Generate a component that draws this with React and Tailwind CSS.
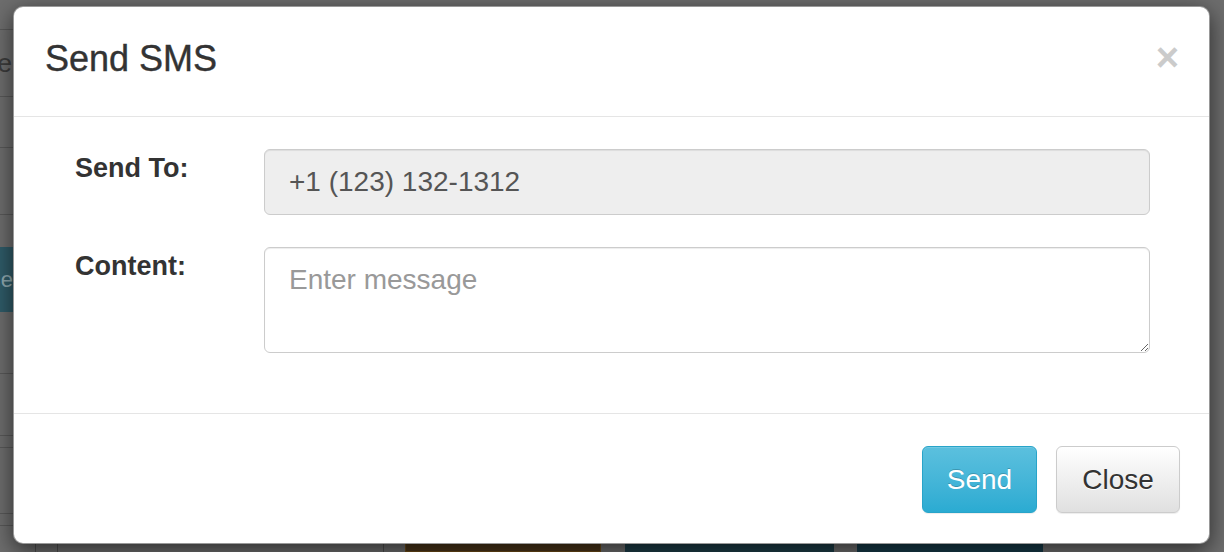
import React from 'react';

const leftRows = [
  { h: 'h-[30px]' },
  { h: 'h-[67px]', text: 'Name' },
  { h: 'h-[51px]' },
  { h: 'h-[67px]' },
];

const lowerRows = ['h-[62px]', 'h-[62px]', 'h-[12px]', 'h-[66px]', 'h-[12px]'];

const Backdrop = () => (
  <div className="flex h-full w-full flex-col bg-[#6d6d6d]">
    <div className="flex w-[383px] flex-col">
      {leftRows.map((row, i) => (
        <div key={i} className={`${row.h} flex items-center border-b border-[#585858]`}>
          {row.text && (
            <div className="flex w-[12px] justify-end whitespace-nowrap text-[26px] text-[#3c3c3c]">{row.text}</div>
          )}
        </div>
      ))}
      <div className="h-[32px]" />
      <div className="flex h-[65px] items-center overflow-hidden bg-[#2f5b68]">
        <div className="ml-[-14px] whitespace-nowrap text-[22px] text-[#8fa9b0]">Search</div>
      </div>
      {lowerRows.map((h, i) => (
        <div key={i} className={`${h} border-b border-[#585858]`} />
      ))}
    </div>
    <div className="mt-auto flex h-[12px] items-stretch">
      <div className="w-[35px]" />
      <div className="w-[22px] border-l border-[#4e4e4e]" />
      <div className="w-[326px] border-l border-[#4e4e4e]" />
      <div className="w-[22px] border-l border-[#4e4e4e]" />
      <div className="w-[196px] border border-[#6b4a17] bg-[#4a3519]" />
      <div className="w-[24px]" />
      <div className="w-[209px] bg-[#1d3d47]" />
      <div className="w-[23px]" />
      <div className="w-[186px] bg-[#163a48]" />
    </div>
  </div>
);

export default function App() {
  return (
    <div className="relative h-[552px] w-[1224px] overflow-hidden font-['Liberation_Sans',Arial,sans-serif] text-[#333]">
      <Backdrop />

      <div className="absolute left-[13px] top-[6px] flex h-[538px] w-[1197px] flex-col rounded-[10px] border border-black/40 bg-white shadow-[0_6px_22px_rgba(0,0,0,0.6)]">
        <div className="flex h-[110px] items-center justify-between border-b border-[#e5e5e5] pb-[6px] pl-[31px] pr-[30px]">
          <h4 className="text-[36px] leading-[40px] text-[#333] [-webkit-text-stroke:0.4px_#333]">Send SMS</h4>
          <button className="mb-[4px] text-[40px] font-bold leading-none text-[#cbcbcb]">×</button>
        </div>

        <div className="flex flex-col gap-[32px] pb-[60px] pl-[61px] pr-[59px] pt-[32px]">
          <div className="flex">
            <label className="w-[189px] pt-[4px] text-[27px] font-bold leading-[30px]">Send To:</label>
            <div className="flex h-[66px] flex-1 items-center rounded-[6px] border border-[#ccc] bg-[#eee] px-[24px] text-[28px] text-[#555] shadow-[inset_0_1px_1px_rgba(0,0,0,0.075)]">
              +1 (123) 132-1312
            </div>
          </div>
          <div className="flex">
            <label className="w-[189px] pt-[4px] text-[27px] font-bold leading-[30px]">Content:</label>
            <textarea
              placeholder="Enter message"
              className="h-[106px] flex-1 rounded-[6px] border border-[#ccc] px-[24px] pt-[13px] text-[28px] leading-[38px] text-[#555] shadow-[inset_0_1px_1px_rgba(0,0,0,0.075)] outline-none placeholder:text-[#999]"
            />
          </div>
        </div>

        <div className="flex justify-end gap-[19px] border-t border-[#e5e5e5] pb-[30px] pr-[29px] pt-[32px]">
          <button className="h-[67px] w-[115px] rounded-[6px] border border-[#28a4c9] bg-linear-to-b from-[#5bc0de] to-[#2aabd2] text-[28px] text-white shadow-[inset_0_1px_0_rgba(255,255,255,0.15),0_1px_1px_rgba(0,0,0,0.075)] [text-shadow:0_-1px_0_rgba(0,0,0,0.2)]">
            Send
          </button>
          <button className="h-[67px] w-[124px] rounded-[6px] border border-[#ccc] bg-linear-to-b from-white to-[#e0e0e0] text-[28px] text-[#333] shadow-[inset_0_1px_0_rgba(255,255,255,0.15),0_1px_1px_rgba(0,0,0,0.075)] [text-shadow:0_1px_0_#fff]">
            Close
          </button>
        </div>
      </div>
    </div>
  );
}
